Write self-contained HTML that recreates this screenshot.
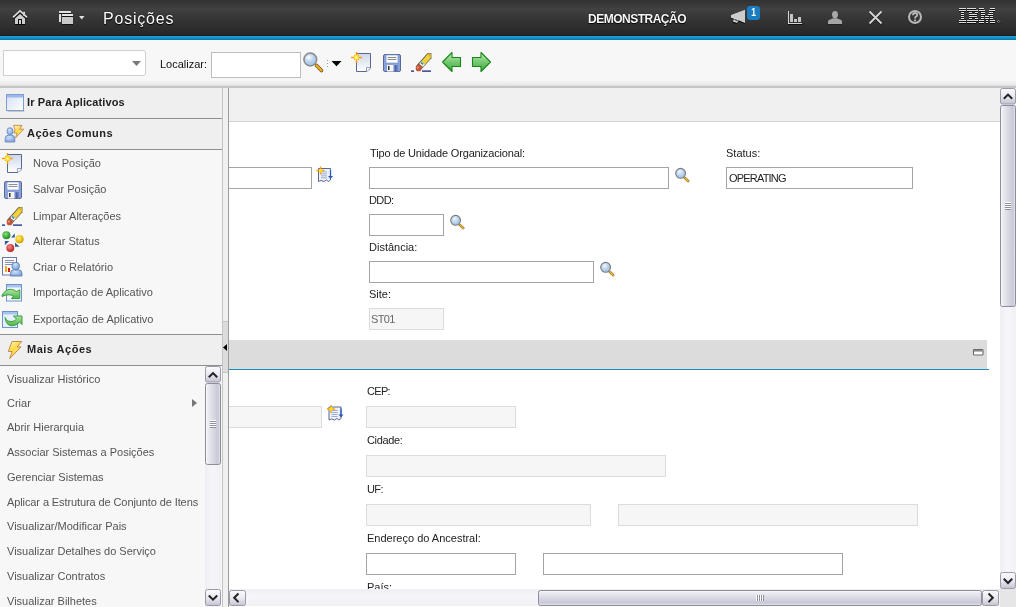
<!DOCTYPE html>
<html><head><meta charset="utf-8">
<style>
*{margin:0;padding:0;box-sizing:border-box}
html,body{width:1016px;height:607px;overflow:hidden;background:#fff;-webkit-font-smoothing:antialiased;font-family:"Liberation Sans",sans-serif;font-size:11px;color:#222}
.a{position:absolute}
#hdr{left:0;top:0;width:1016px;height:36px;background:linear-gradient(#313131 0,#414141 9px,#383838 16px,#2d2d2d 28px,#262626 35px)}
#hdr2{left:0;top:35px;width:1016px;height:1px;background:#211d1d}
#blue{left:0;top:36px;width:1016px;height:4px;background:linear-gradient(#1ca2d8,#1592c6 50%,#0a73a4)}
#tb{left:0;top:40px;width:1016px;height:48px;background:linear-gradient(#fbfbfb 0,#f7f7f7 1px,#f7f7f7 41px,#f0f0f0 41px,#ececec 44px,#e0e0e0 45.5px,#bababa 47px,#d0d0d0 48px)}
.t{position:absolute;white-space:nowrap;line-height:1;will-change:transform}
.inp{position:absolute;background:#fff;border:1px solid #a5a5a5}
.dis{position:absolute;background:#f6f6f6;border:1px solid #dcdcdc}
</style></head><body>
<div id="hdr" class="a"></div>
<div id="hdr2" class="a"></div>
<div id="blue" class="a"></div>
<div id="tb" class="a"></div>

<!-- header text -->
<div class="t" style="left:103px;top:10.6px;font-size:16px;color:#fdfdfd;letter-spacing:0.8px;text-shadow:0 0 1px #000,0 1px 1px #000">Posições</div>
<div class="t" style="left:588px;top:13px;font-size:12px;font-weight:bold;color:#f6f6f6;letter-spacing:-0.5px;text-shadow:0 0 1px #000,0 1px 1px #000">DEMONSTRAÇÃO</div>

<!-- toolbar -->
<div class="a" style="left:3px;top:50px;width:143px;height:26px;background:#fff;border:1px solid #cfcfcf;border-radius:0 3px 3px 0"></div>
<div class="t" style="left:160px;top:59px;font-size:11px;color:#111">Localizar:</div>
<div class="a" style="left:211px;top:52px;width:90px;height:26px;background:#fff;border:1px solid #bdbdbd"></div>

<!-- left panel -->
<div class="a" style="left:0;top:88px;width:222px;height:519px;background:#f7f7f7"></div>
<div class="a" style="left:0;top:88px;width:222px;height:30px;background:#efefef"></div>
<div class="a" style="left:0;top:118px;width:222px;height:1px;background:#8f8f8f"></div>
<div class="a" style="left:0;top:119px;width:222px;height:30px;background:#efefef"></div>
<div class="a" style="left:0;top:149px;width:222px;height:1px;background:#8f8f8f"></div>
<div class="a" style="left:0;top:335px;width:222px;height:30px;background:#efefef"></div>
<div class="a" style="left:0;top:334px;width:222px;height:1px;background:#8f8f8f"></div>
<div class="a" style="left:0;top:365px;width:222px;height:1px;background:#8f8f8f"></div>
<div class="a" style="left:222px;top:88px;width:1px;height:519px;background:#c4c4c4"></div>
<div class="a" style="left:223px;top:88px;width:5px;height:519px;background:#f0f0f0"></div>
<div class="a" style="left:228px;top:88px;width:1px;height:519px;background:#9a9a9a"></div>

<div class="t" style="left:27px;top:97px;font-weight:bold;letter-spacing:0.12px">Ir Para Aplicativos</div>
<div class="t" style="left:27px;top:128px;font-weight:bold;letter-spacing:0.5px">Ações Comuns</div>
<div class="t" style="left:27px;top:344px;font-weight:bold;letter-spacing:0.5px">Mais Ações</div>

<div class="t" style="left:33px;top:158px;color:#555">Nova Posição</div>
<div class="t" style="left:33px;top:184px;color:#555">Salvar Posição</div>
<div class="t" style="left:33px;top:211px;color:#555">Limpar Alterações</div>
<div class="t" style="left:33px;top:236px;color:#555">Alterar Status</div>
<div class="t" style="left:33px;top:262px;color:#555">Criar o Relatório</div>
<div class="t" style="left:33px;top:287px;color:#555">Importação de Aplicativo</div>
<div class="t" style="left:33px;top:314px;color:#555">Exportação de Aplicativo</div>

<div class="t" style="left:7px;top:374px;color:#555">Visualizar Histórico</div>
<div class="t" style="left:7px;top:398px;color:#555">Criar</div>
<div class="t" style="left:7px;top:422px;color:#555">Abrir Hierarquia</div>
<div class="t" style="left:7px;top:447px;color:#555">Associar Sistemas a Posições</div>
<div class="t" style="left:7px;top:472px;color:#555">Gerenciar Sistemas</div>
<div class="t" style="left:7px;top:497px;color:#555;letter-spacing:-0.1px">Aplicar a Estrutura de Conjunto de Itens</div>
<div class="t" style="left:7px;top:521px;color:#555">Visualizar/Modificar Pais</div>
<div class="t" style="left:7px;top:546px;color:#555">Visualizar Detalhes do Serviço</div>
<div class="t" style="left:7px;top:571px;color:#555">Visualizar Contratos</div>
<div class="t" style="left:7px;top:596px;color:#555">Visualizar Bilhetes</div>

<!-- content -->
<div class="a" style="left:229px;top:88px;width:771px;height:33px;background:#f0f0f0"></div>
<div class="a" style="left:229px;top:121px;width:771px;height:1px;background:#d2d2d2"></div>

<div class="inp" style="left:229px;top:167px;width:83px;height:22px;border-left:0"></div>
<div class="t" style="left:370px;top:148px;letter-spacing:-0.16px">Tipo de Unidade Organizacional:</div>
<div class="inp" style="left:369px;top:167px;width:300px;height:22px"></div>
<div class="t" style="left:726px;top:148px">Status:</div>
<div class="inp" style="left:726px;top:167px;width:187px;height:22px"></div>
<div class="t" style="left:729px;top:173px;letter-spacing:-0.8px">OPERATING</div>
<div class="t" style="left:369px;top:195px;letter-spacing:-0.6px">DDD:</div>
<div class="inp" style="left:369px;top:214px;width:75px;height:22px"></div>
<div class="t" style="left:369px;top:242px">Distância:</div>
<div class="inp" style="left:369px;top:261px;width:225px;height:22px"></div>
<div class="t" style="left:369px;top:289px">Site:</div>
<div class="dis" style="left:369px;top:308px;width:75px;height:22px"></div>
<div class="t" style="left:371px;top:314px;color:#666;letter-spacing:-0.6px">ST01</div>

<div class="a" style="left:229px;top:340px;width:758px;height:29px;background:#dcdcdc"></div>
<div class="a" style="left:229px;top:369px;width:760px;height:1px;background:#1b8bc0"></div>

<div class="dis" style="left:229px;top:406px;width:93px;height:22px;border-left:0"></div>
<div class="t" style="left:367px;top:386px;letter-spacing:-0.7px">CEP:</div>
<div class="dis" style="left:366px;top:406px;width:150px;height:22px"></div>
<div class="t" style="left:367px;top:435px;letter-spacing:-0.35px">Cidade:</div>
<div class="dis" style="left:366px;top:455px;width:300px;height:22px"></div>
<div class="t" style="left:367px;top:484px;letter-spacing:-0.6px">UF:</div>
<div class="dis" style="left:366px;top:504px;width:225px;height:22px"></div>
<div class="dis" style="left:618px;top:504px;width:300px;height:22px"></div>
<div class="t" style="left:367px;top:533px">Endereço do Ancestral:</div>
<div class="inp" style="left:366px;top:553px;width:150px;height:22px"></div>
<div class="inp" style="left:543px;top:553px;width:300px;height:22px"></div>
<div class="t" style="left:367px;top:582px">País:</div>


<svg class="a" style="left:0;top:0" width="1016" height="607" viewBox="0 0 1016 607">
<defs>
<linearGradient id="gBtnV" x1="0" y1="0" x2="0" y2="1"><stop offset="0" stop-color="#fbfbfd"/><stop offset="0.5" stop-color="#e9e9f0"/><stop offset="1" stop-color="#c4c4d2"/></linearGradient>
<linearGradient id="gBtnH" x1="0" y1="0" x2="1" y2="0"><stop offset="0" stop-color="#fbfbfd"/><stop offset="0.5" stop-color="#e9e9f0"/><stop offset="1" stop-color="#c4c4d2"/></linearGradient>
<linearGradient id="gThumbV" x1="0" y1="0" x2="1" y2="0"><stop offset="0" stop-color="#ffffff"/><stop offset="0.14" stop-color="#ececf2"/><stop offset="0.8" stop-color="#cacad8"/><stop offset="0.9" stop-color="#d0d0dc"/><stop offset="1" stop-color="#f6f6fa"/></linearGradient>
<linearGradient id="gThumbH" x1="0" y1="0" x2="0" y2="1"><stop offset="0" stop-color="#ffffff"/><stop offset="0.14" stop-color="#ececf2"/><stop offset="0.8" stop-color="#cacad8"/><stop offset="0.9" stop-color="#d0d0dc"/><stop offset="1" stop-color="#f6f6fa"/></linearGradient>
<linearGradient id="gTrackV" x1="0" y1="0" x2="1" y2="0"><stop offset="0" stop-color="#eeeef4"/><stop offset="0.5" stop-color="#f6f6fa"/><stop offset="1" stop-color="#f0f0f5"/></linearGradient>
<linearGradient id="gTrackH" x1="0" y1="0" x2="0" y2="1"><stop offset="0" stop-color="#eeeef4"/><stop offset="0.5" stop-color="#f6f6fa"/><stop offset="1" stop-color="#f0f0f5"/></linearGradient>
<linearGradient id="gDoc" x1="0" y1="0" x2="0" y2="1"><stop offset="0" stop-color="#cdd7ea"/><stop offset="1" stop-color="#ffffff"/></linearGradient>
<linearGradient id="gWin" x1="0" y1="0" x2="1" y2="1"><stop offset="0" stop-color="#d3dff2"/><stop offset="1" stop-color="#ffffff"/></linearGradient>
<linearGradient id="gGreen" x1="0" y1="0" x2="0" y2="1"><stop offset="0" stop-color="#c8eec2"/><stop offset="0.45" stop-color="#7ccc76"/><stop offset="1" stop-color="#3ea83e"/></linearGradient>
<linearGradient id="gBolt" x1="0" y1="0" x2="0.6" y2="1"><stop offset="0" stop-color="#fffbe8"/><stop offset="0.45" stop-color="#ffdc48"/><stop offset="1" stop-color="#f6de78"/></linearGradient>
<radialGradient id="gLens" cx="0.4" cy="0.35" r="0.7"><stop offset="0" stop-color="#f0f6fc"/><stop offset="0.5" stop-color="#bcd4ee"/><stop offset="1" stop-color="#98bce4"/></radialGradient>
<radialGradient id="gPers" cx="0.4" cy="0.3" r="0.7"><stop offset="0" stop-color="#d0e2f6"/><stop offset="0.6" stop-color="#9ebde6"/><stop offset="1" stop-color="#7ea2d4"/></radialGradient>
</defs>

<!-- ===== header icons ===== -->
<g>
 <!-- home shadow -->
 <path d="M13,18.6 L20,12 L27,18.6" fill="none" stroke="#0a0a0a" stroke-width="2"/>
 <rect x="14.8" y="19" width="10.4" height="6" fill="#0a0a0a"/>
 <path d="M15,18.6 L20,13.9 L25,18.6 L25,24 L15,24 Z" fill="#cdcdcd"/>
 <path d="M13,17.4 L20,10.9 L27,17.4" fill="none" stroke="#dedede" stroke-width="1.7"/>
 <rect x="23.2" y="11.8" width="1.8" height="4" fill="#d8d8d8"/>
 <rect x="18" y="19" width="4" height="5" fill="#111"/>
 <rect x="19" y="20" width="2" height="4" fill="#d4d4d4"/>
</g>
<g>
 <rect x="59" y="12" width="12" height="2" fill="#111"/>
 <rect x="59" y="11" width="12" height="2" fill="#e2e2e2" rx="0.5"/>
 <rect x="59" y="14" width="2" height="8" fill="#e0e0e0"/>
 <rect x="62" y="14" width="11" height="11" fill="#111"/>
 <rect x="62" y="14" width="11" height="2" fill="#e4e4e4"/>
 <rect x="62" y="17" width="11" height="7" fill="#c9c9c9"/>
 <path d="M79,16 L84.5,16 L81.75,19.5 Z" fill="#e0e0e0"/>
</g>
<g>
 <!-- megaphone -->
 <path d="M731,15.2 L745,10 L745,23.2 L738,20.5 L736.5,23.5 L732.5,22 L733.5,19 L731,18 Z" fill="#0d0d0d" transform="translate(0,0.8)"/>
 <path d="M731,15 L745,9.8 L745,23 L738.5,20.2 L737,23 L732.8,21.5 L734,18.8 L731,17.8 Z" fill="#cccccc"/>
 <path d="M734.5,19.5 L737.5,20.6" stroke="#222" stroke-width="1"/>
 <rect x="747" y="6" width="13" height="14" rx="3" fill="#1a7cc1"/>
 <text x="753.5" y="16.5" font-family="Liberation Sans" font-weight="bold" font-size="10" fill="#fff" text-anchor="middle" transform="translate(753.5,0) scale(0.85,1) translate(-753.5,0)">1</text>
</g>
<g>
 <!-- chart -->
 <rect x="788" y="24" width="15" height="1" fill="#111"/>
 <rect x="788" y="11" width="1" height="13" fill="#d4d4d4"/>
 <rect x="788" y="23" width="14" height="1" fill="#d4d4d4"/>
 <rect x="790" y="14" width="3" height="8" fill="#c4c4c4"/>
 <rect x="794" y="19" width="3" height="3" fill="#c4c4c4"/>
 <rect x="798" y="17" width="3" height="5" fill="#c4c4c4"/>
 <!-- person -->
 <path d="M828,24.6 L828,22 Q828,20 831.5,19.5 L833,19 L837,19 L838.5,19.5 Q842,20 842,22 L842,24.6 Z" fill="#111"/>
 <ellipse cx="835" cy="14.6" rx="3" ry="3.6" fill="#a8a8a8"/>
 <path d="M828,24 L828,21.5 Q828,19.6 831.5,19 L833,18.2 L837,18.2 L838.5,19 Q842,19.6 842,21.5 L842,24 Z" fill="#a5a5a5"/>
 <!-- X -->
 <path d="M869.5,12.2 L881.5,24.2 M881.5,12.2 L869.5,24.2" stroke="#111" stroke-width="2"/>
 <path d="M869.5,11.5 L881.5,23.5 M881.5,11.5 L869.5,23.5" stroke="#d6d6d6" stroke-width="1.8"/>
 <!-- help -->
 <circle cx="915" cy="17.3" r="6.2" fill="none" stroke="#111" stroke-width="1.8"/>
 <circle cx="915" cy="17" r="6" fill="none" stroke="#b8b8b8" stroke-width="2.1"/>
 <path d="M912.9,15.3 Q912.9,13 915,13 Q917.2,13 917.2,15 Q917.2,16.2 915.7,16.9 Q915,17.3 915,18.5" fill="none" stroke="#b8b8b8" stroke-width="1.8"/>
 <rect x="914" y="19.5" width="2" height="1.8" fill="#b8b8b8"/>
</g>
<g id="ibm">
 <g fill="#0c0c0c" transform="translate(0,0.9)">
  <rect x="959" y="8" width="7" height="1"/><rect x="967" y="8" width="9" height="1"/><rect x="979" y="8" width="5" height="1"/><rect x="990" y="8" width="5" height="1"/>
  <rect x="959" y="10" width="7" height="1"/><rect x="967" y="10" width="11" height="1"/><rect x="979" y="10" width="6" height="1"/><rect x="989" y="10" width="6" height="1"/>
  <rect x="961" y="12" width="3" height="1"/><rect x="969" y="12" width="3" height="1"/><rect x="975" y="12" width="3" height="1"/><rect x="981" y="12" width="4" height="1"/><rect x="989" y="12" width="4" height="1"/>
  <rect x="961" y="14" width="3" height="1"/><rect x="969" y="14" width="8" height="1"/><rect x="981" y="14" width="4" height="1"/><rect x="988" y="14" width="5" height="1"/>
  <rect x="961" y="16" width="3" height="1"/><rect x="969" y="16" width="8" height="1"/><rect x="981" y="16" width="3" height="1"/><rect x="985" y="16" width="4" height="1"/><rect x="990" y="16" width="3" height="1"/>
  <rect x="961" y="18" width="3" height="1"/><rect x="969" y="18" width="3" height="1"/><rect x="975" y="18" width="3" height="1"/><rect x="981" y="18" width="3" height="1"/><rect x="985" y="18" width="4" height="1"/><rect x="990" y="18" width="3" height="1"/>
  <rect x="959" y="20" width="7" height="1"/><rect x="967" y="20" width="11" height="1"/><rect x="979" y="20" width="5" height="1"/><rect x="986" y="20" width="2" height="1"/><rect x="990" y="20" width="5" height="1"/>
  <rect x="959" y="22" width="7" height="1"/><rect x="967" y="22" width="9" height="1"/><rect x="979" y="22" width="5" height="1"/><rect x="986" y="22" width="2" height="1"/><rect x="990" y="22" width="5" height="1"/>
 </g>
 <g fill="#dedede">
  <rect x="959" y="8" width="7" height="1"/><rect x="967" y="8" width="9" height="1"/><rect x="979" y="8" width="5" height="1"/><rect x="990" y="8" width="5" height="1"/>
  <rect x="959" y="10" width="7" height="1"/><rect x="967" y="10" width="11" height="1"/><rect x="979" y="10" width="6" height="1"/><rect x="989" y="10" width="6" height="1"/>
  <rect x="961" y="12" width="3" height="1"/><rect x="969" y="12" width="3" height="1"/><rect x="975" y="12" width="3" height="1"/><rect x="981" y="12" width="4" height="1"/><rect x="989" y="12" width="4" height="1"/>
  <rect x="961" y="14" width="3" height="1"/><rect x="969" y="14" width="8" height="1"/><rect x="981" y="14" width="4" height="1"/><rect x="988" y="14" width="5" height="1"/>
  <rect x="961" y="16" width="3" height="1"/><rect x="969" y="16" width="8" height="1"/><rect x="981" y="16" width="3" height="1"/><rect x="985" y="16" width="4" height="1"/><rect x="990" y="16" width="3" height="1"/>
  <rect x="961" y="18" width="3" height="1"/><rect x="969" y="18" width="3" height="1"/><rect x="975" y="18" width="3" height="1"/><rect x="981" y="18" width="3" height="1"/><rect x="985" y="18" width="4" height="1"/><rect x="990" y="18" width="3" height="1"/>
  <rect x="959" y="20" width="7" height="1"/><rect x="967" y="20" width="11" height="1"/><rect x="979" y="20" width="5" height="1"/><rect x="986" y="20" width="2" height="1"/><rect x="990" y="20" width="5" height="1"/>
  <rect x="959" y="22" width="7" height="1"/><rect x="967" y="22" width="9" height="1"/><rect x="979" y="22" width="5" height="1"/><rect x="986" y="22" width="2" height="1"/><rect x="990" y="22" width="5" height="1"/>
 </g>
 <path d="M998.5,20.3 L999.8,21.6 L998.5,22.9 L997.2,21.6 Z" fill="none" stroke="#0a0a0a" stroke-width="1.2" transform="translate(0,0.6)"/><path d="M998.5,20.3 L999.8,21.6 L998.5,22.9 L997.2,21.6 Z" fill="none" stroke="#d0d0d0" stroke-width="0.7"/>
</g>


<!-- ===== toolbar ===== -->
<path d="M132,61 L141,61 L136.5,66 Z" fill="#7a7a7a"/>
<g id="mag">
 <path d="M316.5,65.5 L321.5,70.5" stroke="#6a4a20" stroke-width="3.6" stroke-linecap="round"/>
 <path d="M316.5,65.5 L321.5,70.5" stroke="#f2b020" stroke-width="2.2" stroke-linecap="round"/>
 <circle cx="310.3" cy="59.5" r="6.4" fill="url(#gLens)" stroke="#8a8a8a" stroke-width="1.5"/>
 <ellipse cx="308.5" cy="57.5" rx="2.2" ry="1.8" fill="#f4f8fc" opacity="0.7"/>
</g>
<rect x="327" y="60" width="1" height="1" fill="#9a9ac0"/>
<rect x="327" y="63" width="1" height="1" fill="#9a9ac0"/>
<rect x="327" y="66" width="1" height="1" fill="#9a9ac0"/>
<path d="M331.5,61 L341.5,61 L336.5,66.2 Z" fill="#000"/>

<g id="newdoc">
 <path d="M356.5,53.5 L370.5,53.5 L370.5,68 L367,71.5 L356.5,71.5 Z" fill="url(#gDoc)" stroke="#5b6894" stroke-width="1"/>
 <path d="M366.5,71.5 L366.5,67.5 L370.5,67.5" fill="#fff" stroke="#7b88b0" stroke-width="0.8"/>
 <path d="M356.5,52 L356.5,63 M351,57.5 L362,57.5" stroke="#ff9a00" stroke-width="1.5"/>
 <path d="M354,55 L359,60 M359,55 L354,60" stroke="#ffa800" stroke-width="1"/>
 <circle cx="356.5" cy="57.5" r="2.4" fill="#ffe020"/>
 <circle cx="356.5" cy="57.5" r="1.2" fill="#fff6a0"/>
</g>
<g id="save">
 <rect x="383.5" y="54.5" width="17" height="17" rx="1.5" fill="#8aa3dc" stroke="#5a6996" stroke-width="1"/>
 <rect x="386" y="55" width="12" height="8" fill="#fafbfd" stroke="#7b8cc0" stroke-width="0.6"/>
 <rect x="387.5" y="57" width="9" height="1" fill="#8a8f9a"/>
 <rect x="387.5" y="59" width="9" height="1" fill="#8a8f9a"/>
 <rect x="387" y="65" width="11" height="6.5" fill="#6f86c6"/>
 <rect x="387" y="65" width="6.5" height="6.5" fill="#f4f4f4"/>
 <rect x="388" y="66" width="1.5" height="4" fill="#333"/>
 <rect x="395" y="65.5" width="1.5" height="6" fill="#5060a0"/>
</g>
<g id="eraser">
 <rect x="411" y="70.3" width="3" height="1.7" fill="#4a5aa0"/>
 <rect x="422" y="70.3" width="9" height="1.7" fill="#4a5aa0"/>
 <path d="M415.6,66.6 L427.4,53.2 L431.4,53 L431.4,58.3 L420.2,70.6 Z" fill="#5a5038"/>
 <path d="M421.4,61.3 L427.8,54 L430.8,53.6 L430.8,58 L425,64.5 Z" fill="#efd040"/>
 <path d="M427.8,54 L430.8,53.6 L430.8,58 Z" fill="#d8b020"/>
 <path d="M419.2,63.9 L421.4,61.3 L425,64.5 L422.7,67.1 Z" fill="#f0f8f8"/>
 <path d="M420.6,63.2 L421.6,62 L423.6,63.8 L422.6,65 Z" fill="#2a8a8a"/>
 <circle cx="418.6" cy="68.4" r="2.9" fill="#c0583a"/>
 <path d="M416.2,66.4 L419.2,63.9 L422.7,67.1 L420.4,70 Z" fill="#c0583a"/>
 <circle cx="417.8" cy="67.6" r="1" fill="#e8a090"/>
</g>
<g id="back">
 <path d="M442.5,62 L452,52.5 L452,57.5 L460.5,57.5 L460.5,66.5 L452,66.5 L452,71.5 Z" fill="url(#gGreen)" stroke="#17871a" stroke-width="1.1" stroke-linejoin="round"/>
</g>
<g id="fwd">
 <path d="M490.5,62 L481,52.5 L481,57.5 L472.5,57.5 L472.5,66.5 L481,66.5 L481,71.5 Z" fill="url(#gGreen)" stroke="#17871a" stroke-width="1.1" stroke-linejoin="round"/>
</g>

<!-- ===== left panel icons ===== -->
<g id="winico">
 <rect x="6.5" y="94.5" width="17" height="16" fill="url(#gWin)" stroke="#7e9dd4" stroke-width="1"/>
 <rect x="7" y="95" width="16" height="2.5" fill="#9bb8e6"/>
 <rect x="7.5" y="111" width="17" height="1" fill="#c8c8c8"/>
</g>
<g id="acoes">
 <path d="M13.6,125.4 L22,125.4 L19.6,129.2 L23.8,129.2 L15.6,137.8 L17.2,133 L13.8,133 L15,130 Z" fill="url(#gBolt)" stroke="#c48a48" stroke-width="0.9" stroke-linejoin="round"/>
 <path d="M5.2,142 L5.2,138.5 Q5.2,135.2 8.5,135.2 L11.5,135.2 Q14.8,135.2 14.8,138.5 L14.8,142 Z" fill="url(#gPers)" stroke="#6a8cc8" stroke-width="0.9"/>
 <ellipse cx="10" cy="131.3" rx="3" ry="3.6" fill="url(#gPers)" stroke="#6a8cc8" stroke-width="0.9"/>
</g>
<use href="#newdoc" transform="translate(-349,101)"/>
<use href="#save" transform="translate(-379,127)"/>
<use href="#eraser" transform="translate(-409,154)"/>
<g id="status">
 <radialGradient id="gBallG" cx="0.4" cy="0.35" r="0.65"><stop offset="0" stop-color="#8fdc8a"/><stop offset="0.6" stop-color="#3fae3a"/><stop offset="1" stop-color="#2a8a2a"/></radialGradient>
 <radialGradient id="gBallY" cx="0.4" cy="0.35" r="0.65"><stop offset="0" stop-color="#fff080"/><stop offset="0.6" stop-color="#eec418"/><stop offset="1" stop-color="#c89c00"/></radialGradient>
 <radialGradient id="gBallR" cx="0.4" cy="0.35" r="0.65"><stop offset="0" stop-color="#f09090"/><stop offset="0.6" stop-color="#d84444"/><stop offset="1" stop-color="#b02c2c"/></radialGradient>
 <circle cx="6.4" cy="235.3" r="4" fill="url(#gBallG)"/>
 <circle cx="19.5" cy="239.2" r="4.1" fill="url(#gBallY)"/>
 <circle cx="10.3" cy="248" r="4" fill="url(#gBallR)"/>
 <path d="M11,237.6 L14.8,233.4 L14.8,237.6 Z" fill="#2c5c9c"/>
 <path d="M4.9,241 L9.2,241 L4.9,245.3 Z" fill="#2c5c9c"/>
 <path d="M15,242.6 L15,246.8 L19.5,246.8 Z" fill="#2c5c9c"/>
</g>
<g id="report">
 <rect x="2.5" y="257.5" width="14" height="17.5" fill="#fbfbfe" stroke="#6a78a8" stroke-width="1"/>
 <rect x="5" y="260" width="9" height="1" fill="#8890b0"/>
 <rect x="5" y="262" width="9" height="1" fill="#8890b0"/>
 <rect x="5" y="264" width="8" height="1" fill="#8890b0"/>
 <rect x="5" y="266" width="2" height="6" fill="#eeb010"/>
 <rect x="8" y="268" width="2" height="4" fill="#d81818"/>
 <path d="M10.5,276 L10.5,273.5 Q10.5,270 13.5,269.8 L18.5,269.8 Q22,270 22,273.5 L22,276 Z" fill="url(#gPers)" stroke="#5a80b8" stroke-width="0.9"/>
 <circle cx="15.7" cy="266" r="3.8" fill="url(#gPers)" stroke="#5a80b8" stroke-width="0.9"/>
</g>
<g id="import">
 <linearGradient id="gArr" x1="0" y1="0" x2="0" y2="1"><stop offset="0" stop-color="#b0e4a8"/><stop offset="1" stop-color="#4eb44a"/></linearGradient>
 <rect x="6.5" y="284.5" width="15" height="16.5" fill="#f4f8fd" stroke="#6f92cc" stroke-width="1"/>
 <rect x="7" y="285" width="14" height="2.5" fill="#a8c4f0"/>
 <path d="M2,295.5 Q5,289.3 10.5,289.3 Q14,289.3 16.2,291.6 L19.8,289.8 L19.8,298.6 L11.2,298.6 L13.8,296.6 Q11.5,294.8 9,294.8 Q5,294.8 2,296.5 Z" fill="url(#gArr)" stroke="#2a9a2a" stroke-width="0.9" stroke-linejoin="round"/>
</g>
<g id="export">
 <rect x="2.5" y="311.5" width="15" height="16" fill="#e6f2fb" stroke="#6f92cc" stroke-width="1"/>
 <rect x="3" y="312" width="14" height="2.5" fill="#a8c4f0"/>
 <path d="M5,317.5 Q7,322 12,321.5 Q15,321 16.5,319.2 L13.5,316 L22,316 L22,324.6 L19.6,322.2 Q16,325.8 12,325.8 Q6,325.8 5,317.5 Z" fill="url(#gArr)" stroke="#2a9a2a" stroke-width="0.9" stroke-linejoin="round"/>
</g>
<g id="bolt">
 <path d="M12,341.5 L21.7,341.5 L17.2,346.9 L21,346.9 L9.6,358.7 L12.2,351.5 L8.3,351.5 Z" fill="url(#gBolt)" stroke="#c48a48" stroke-width="1" stroke-linejoin="round"/>
</g>
<path d="M192,399 L197,403 L192,407 Z" fill="#777"/>


<!-- ===== content icons ===== -->
<g id="detail">
 <path d="M318.5,168.5 L330.5,168.5 L330.5,180 L328.5,181.5 L326.5,180 L324,181.5 L321,180.5 L318.5,181.5 Z" fill="#eef2fa" stroke="#5b6894" stroke-width="1"/>
 <rect x="321" y="171.5" width="6" height="0.8" fill="#8a9ac8"/>
 <rect x="321" y="173.5" width="6" height="0.8" fill="#8a9ac8"/>
 <rect x="321" y="175.5" width="6" height="0.8" fill="#8a9ac8"/>
 <rect x="321" y="177.5" width="6" height="0.8" fill="#8a9ac8"/>
 <path d="M330.5,170 L330.5,177" stroke="#2a5cc0" stroke-width="1.3"/>
 <path d="M328,176 L333,176 L330.5,179 Z" fill="#2a5cc0"/>
 <path d="M320.5,166.5 L320.5,174.5 M316.5,170.5 L324.5,170.5" stroke="#ff9a00" stroke-width="1.3"/>
 <circle cx="320.5" cy="170.5" r="1.8" fill="#ffe020"/>
</g>
<use href="#detail" transform="translate(10.5,238.5)"/>
<g id="smag">
 <path d="M459.8,224.8 L463.2,228.2" stroke="#7a5a30" stroke-width="2.6" stroke-linecap="round"/>
 <path d="M459.8,224.8 L463.2,228.2" stroke="#f0c030" stroke-width="1.5" stroke-linecap="round"/>
 <circle cx="455.6" cy="220.3" r="4.9" fill="url(#gLens)" stroke="#7a7a7a" stroke-width="1.1"/>
</g>
<use href="#smag" transform="translate(225,-47)"/>
<use href="#smag" transform="translate(150,47)"/>
<g id="collapse">
 <rect x="973.5" y="349.5" width="9.5" height="5.5" rx="0.8" fill="#fdfdfd" stroke="#6a6a6a" stroke-width="1.1"/>
 <rect x="974" y="350" width="8.5" height="1.6" fill="#8a8a8a"/>
</g>

<!-- ===== splitter ===== -->
<rect x="223" y="322" width="5" height="50" fill="#dcdcdc"/>
<rect x="223" y="321" width="5" height="1" fill="#c8c8c8"/>
<rect x="223" y="372" width="5" height="1" fill="#c8c8c8"/>
<path d="M227,344 L223,347.5 L227,351 Z" fill="#000"/>

<!-- ===== left panel scrollbar ===== -->
<rect x="205" y="366" width="16" height="241" fill="url(#gTrackV)"/>
<rect x="205.5" y="366.5" width="15" height="15.5" rx="2" fill="url(#gBtnV)" stroke="#9a9aa8" stroke-width="1"/>
<path d="M208.8,377.3 L213,373.1 L217.2,377.3" fill="none" stroke="#222" stroke-width="2"/>
<rect x="205.5" y="383.5" width="15" height="81" rx="2" fill="url(#gThumbV)" stroke="#8c8c9c" stroke-width="1"/>
<rect x="210" y="420" width="6" height="1" fill="#fff"/><rect x="210" y="421" width="6" height="1" fill="#8890a0"/>
<rect x="210" y="422" width="6" height="1" fill="#fff"/><rect x="210" y="423" width="6" height="1" fill="#8890a0"/>
<rect x="210" y="424" width="6" height="1" fill="#fff"/><rect x="210" y="425" width="6" height="1" fill="#8890a0"/>
<rect x="210" y="426" width="6" height="1" fill="#fff"/><rect x="210" y="427" width="6" height="1" fill="#8890a0"/>
<rect x="205.5" y="589.5" width="15" height="16" rx="2" fill="url(#gBtnV)" stroke="#9a9aa8" stroke-width="1"/>
<path d="M208.8,595.5 L213,599.7 L217.2,595.5" fill="none" stroke="#222" stroke-width="2"/>

<!-- ===== content vertical scrollbar ===== -->
<rect x="1000" y="88" width="16" height="501" fill="url(#gTrackV)"/>
<rect x="1000.5" y="88.5" width="15" height="15.5" rx="2" fill="url(#gBtnV)" stroke="#9a9aa8" stroke-width="1"/>
<path d="M1003.8,98.8 L1008,94.6 L1012.2,98.8" fill="none" stroke="#222" stroke-width="2"/>
<rect x="1000.5" y="105.5" width="15" height="201" rx="2" fill="url(#gThumbV)" stroke="#8c8c9c" stroke-width="1"/>
<rect x="1005" y="202" width="6" height="1" fill="#fff"/><rect x="1005" y="203" width="6" height="1" fill="#8890a0"/>
<rect x="1005" y="204" width="6" height="1" fill="#fff"/><rect x="1005" y="205" width="6" height="1" fill="#8890a0"/>
<rect x="1005" y="206" width="6" height="1" fill="#fff"/><rect x="1005" y="207" width="6" height="1" fill="#8890a0"/>
<rect x="1005" y="208" width="6" height="1" fill="#fff"/><rect x="1005" y="209" width="6" height="1" fill="#8890a0"/>
<rect x="1000.5" y="572.5" width="15" height="16" rx="2" fill="url(#gBtnV)" stroke="#9a9aa8" stroke-width="1"/>
<path d="M1003.8,578.8 L1008,583 L1012.2,578.8" fill="none" stroke="#222" stroke-width="2"/>
<rect x="1000" y="589" width="16" height="18" fill="#e6e6e6"/>

<!-- ===== horizontal scrollbar ===== -->
<rect x="229" y="589" width="771" height="17" fill="url(#gTrackH)"/>
<rect x="229.5" y="590.5" width="16" height="15" rx="2" fill="url(#gBtnV)" stroke="#9a9aa8" stroke-width="1"/>
<path d="M238.5,593.5 L234.2,597.8 L238.5,602.1" fill="none" stroke="#222" stroke-width="2"/>
<rect x="538.5" y="590.5" width="443" height="15" rx="2" fill="url(#gThumbH)" stroke="#8c8c9c" stroke-width="1"/>
<rect x="756" y="595" width="1" height="6" fill="#fff"/><rect x="757" y="595" width="1" height="6" fill="#8890a0"/>
<rect x="758" y="595" width="1" height="6" fill="#fff"/><rect x="759" y="595" width="1" height="6" fill="#8890a0"/>
<rect x="760" y="595" width="1" height="6" fill="#fff"/><rect x="761" y="595" width="1" height="6" fill="#8890a0"/>
<rect x="762" y="595" width="1" height="6" fill="#fff"/><rect x="763" y="595" width="1" height="6" fill="#8890a0"/>
<rect x="982.5" y="590.5" width="16" height="15" rx="2" fill="url(#gBtnV)" stroke="#9a9aa8" stroke-width="1"/>
<path d="M988.5,593.5 L992.8,597.8 L988.5,602.1" fill="none" stroke="#222" stroke-width="2"/>
<rect x="229" y="606" width="771" height="1" fill="#fdfdfd"/>

<!--ICONS4-->
</svg>
</body></html>
